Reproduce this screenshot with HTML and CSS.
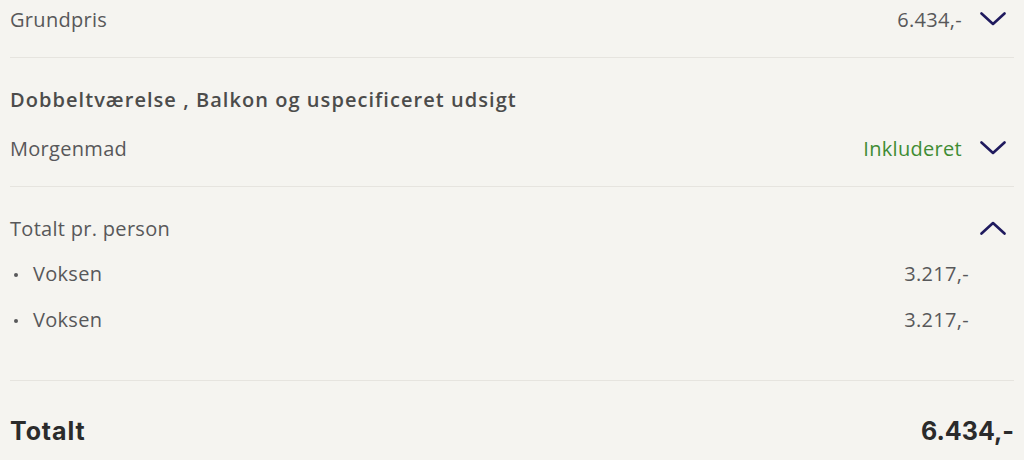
FILE: index.html
```html
<!DOCTYPE html>
<html>
	<head>
		<meta charset="UTF-8">
		<title>Pris</title>
		<link rel="stylesheet" href="styles.css">
	</head>
	<body>
		<div class="price">
			<div class="section first">
				<div class="row">
					<span class="label">Grundpris</span>
					<span class="value">6.434,-</span>
					<svg class="chev" viewBox="0 0 26 14"><path d="M1.5 1.5 L13 12 L24.5 1.5"/></svg>
				</div>
			</div>
			<div class="section room">
				<h3>Dobbeltværelse , Balkon og uspecificeret udsigt</h3>
				<div class="row">
					<span class="label">Morgenmad</span>
					<span class="value green">Inkluderet</span>
					<svg class="chev" viewBox="0 0 26 14"><path d="M1.5 1.5 L13 12 L24.5 1.5"/></svg>
				</div>
			</div>
			<div class="section persons">
				<div class="row">
					<span class="label">Totalt pr. person</span>
					<svg class="chev" viewBox="0 0 26 14"><path d="M1.5 12.5 L13 2 L24.5 12.5"/></svg>
				</div>
				<ul>
					<li><span>Voksen</span><span class="value">3.217,-</span></li>
					<li><span>Voksen</span><span class="value">3.217,-</span></li>
				</ul>
			</div>
			<div class="total">
				<span class="word">Totalt</span>
				<span>6.434,-</span>
			</div>
		</div>
	</body>
</html>
```

FILE: styles.css
```css
*{
	margin: 0;
	padding: 0;
}
body{
	background: #f5f4f0;
	font-family: "Open Sans", "Lato", sans-serif;
	color: #58585a;
}
li{
	list-style: none;
}
.price{
	padding: 0 10px;
}
.section{
	border-bottom: 1px solid #e6e4df;
}
.first{
	padding: 5px 0 24px;
}
.room{
	padding: 28px 0 24px;
}
.room h3{
	font-size: 20px;
	font-weight: 600;
	letter-spacing: 1.05px;
	line-height: 28px;
	color: #4c4c4b;
	margin-bottom: 20px;
}
.persons{
	padding: 27px 0 47px;
}
.row{
	display: flex;
	align-items: center;
	height: 28px;
	font-size: 20px;
	letter-spacing: 0.3px;
}
.row .label{
	flex: 1;
}
.row .value{
	margin-right: 18px;
}
.green{
	color: #3e8c34;
}
.chev{
	width: 26px;
	height: 14px;
	margin-right: 8px;
	fill: none;
	stroke: #1f1a5e;
	stroke-width: 2.6;
	stroke-linecap: round;
	stroke-linejoin: round;
}
.persons ul{
	display: flex;
	flex-direction: column;
	gap: 18px;
	margin-top: 17px;
}
.persons li{
	display: flex;
	align-items: center;
	height: 28px;
	font-size: 20px;
	letter-spacing: 0.3px;
	padding-left: 23px;
	position: relative;
}
.persons li::before{
	content: "";
	position: absolute;
	left: 4px;
	top: 14px;
	width: 4px;
	height: 4px;
	border-radius: 50%;
	background: #58585a;
}
.persons li span:first-child{
	flex: 1;
}
.persons li .value{
	margin-right: 45px;
}
.total{
	display: flex;
	justify-content: space-between;
	align-items: center;
	padding-top: 34px;
	height: 32px;
	font-family: "Inter", sans-serif;
	font-weight: 700;
	font-size: 25px;
	color: #2b2b2b;
}
.total .word{
	letter-spacing: 0.9px;
}
```
